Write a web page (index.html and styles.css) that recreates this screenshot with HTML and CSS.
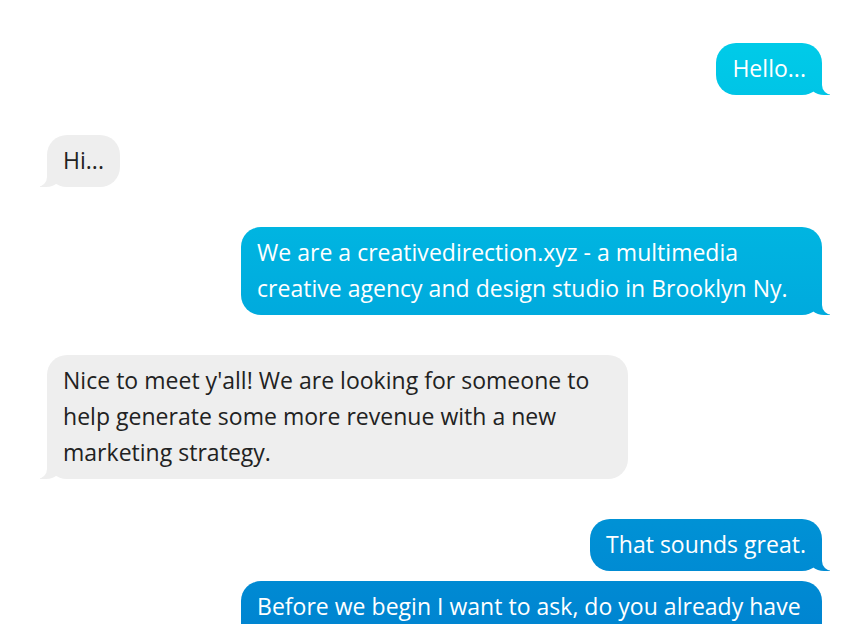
FILE: index.html
```html
<!DOCTYPE html>
<html lang="en">
<head>
<meta charset="utf-8">
<title>Messages</title>
<link rel="stylesheet" href="styles.css">
</head>
<body>
<div class="chat">
  <p class="msg me">Hello...</p>
  <p class="msg them">Hi...</p>
  <p class="msg me">We are a creativedirection.xyz - a multimedia creative agency and design studio in Brooklyn Ny.</p>
  <p class="msg them">Nice to meet y'all! We are looking for someone to help generate some more revenue with a new marketing strategy.</p>
  <p class="msg me">That sounds great.</p>
  <p class="msg me cont">Before we begin I want to ask, do you already have a brand identity and a website?</p>
</div>
</body>
</html>
```
FILE: styles.css
```css
html, body {
  margin: 0;
  background: #ffffff;
}

.chat {
  display: flex;
  flex-direction: column;
  padding: 43px 43px 0 47px;
  font-family: "Open Sans", "Noto Sans", sans-serif;
  font-size: 23px;
  letter-spacing: 0.02px;
  line-height: 36px;
}

.msg {
  position: relative;
  box-sizing: border-box;
  max-width: 581px;
  margin: 0;
  padding: 7px 16px 9px;
  border-radius: 20px;
}

.msg + .msg {
  margin-top: 40px;
}

.msg.cont {
  margin-top: 10px;
}

.me {
  align-self: flex-end;
  color: #ffffff;
  background: linear-gradient(to bottom, #00d0ea 0%, #0085d1 100%);
  background-attachment: fixed;
}

.them {
  align-self: flex-start;
  color: #222222;
  background: #eeeeee;
}

.me::before,
.me::after,
.them::before,
.them::after {
  content: "";
  position: absolute;
  bottom: 0;
  height: 22px;
}

.me::before {
  z-index: 0;
  right: -8px;
  width: 22px;
  background: linear-gradient(to bottom, #00d0ea 0%, #0085d1 100%);
  background-attachment: fixed;
  border-bottom-left-radius: 16px 14px;
}

.me::after {
  z-index: 1;
  right: -26px;
  width: 26px;
  background: #ffffff;
  border-bottom-left-radius: 10px;
}

.them::before {
  z-index: 0;
  left: -7px;
  width: 22px;
  background: #eeeeee;
  border-bottom-right-radius: 16px 14px;
}

.them::after {
  z-index: 1;
  left: -26px;
  width: 26px;
  background: #ffffff;
  border-bottom-right-radius: 10px;
}
```
